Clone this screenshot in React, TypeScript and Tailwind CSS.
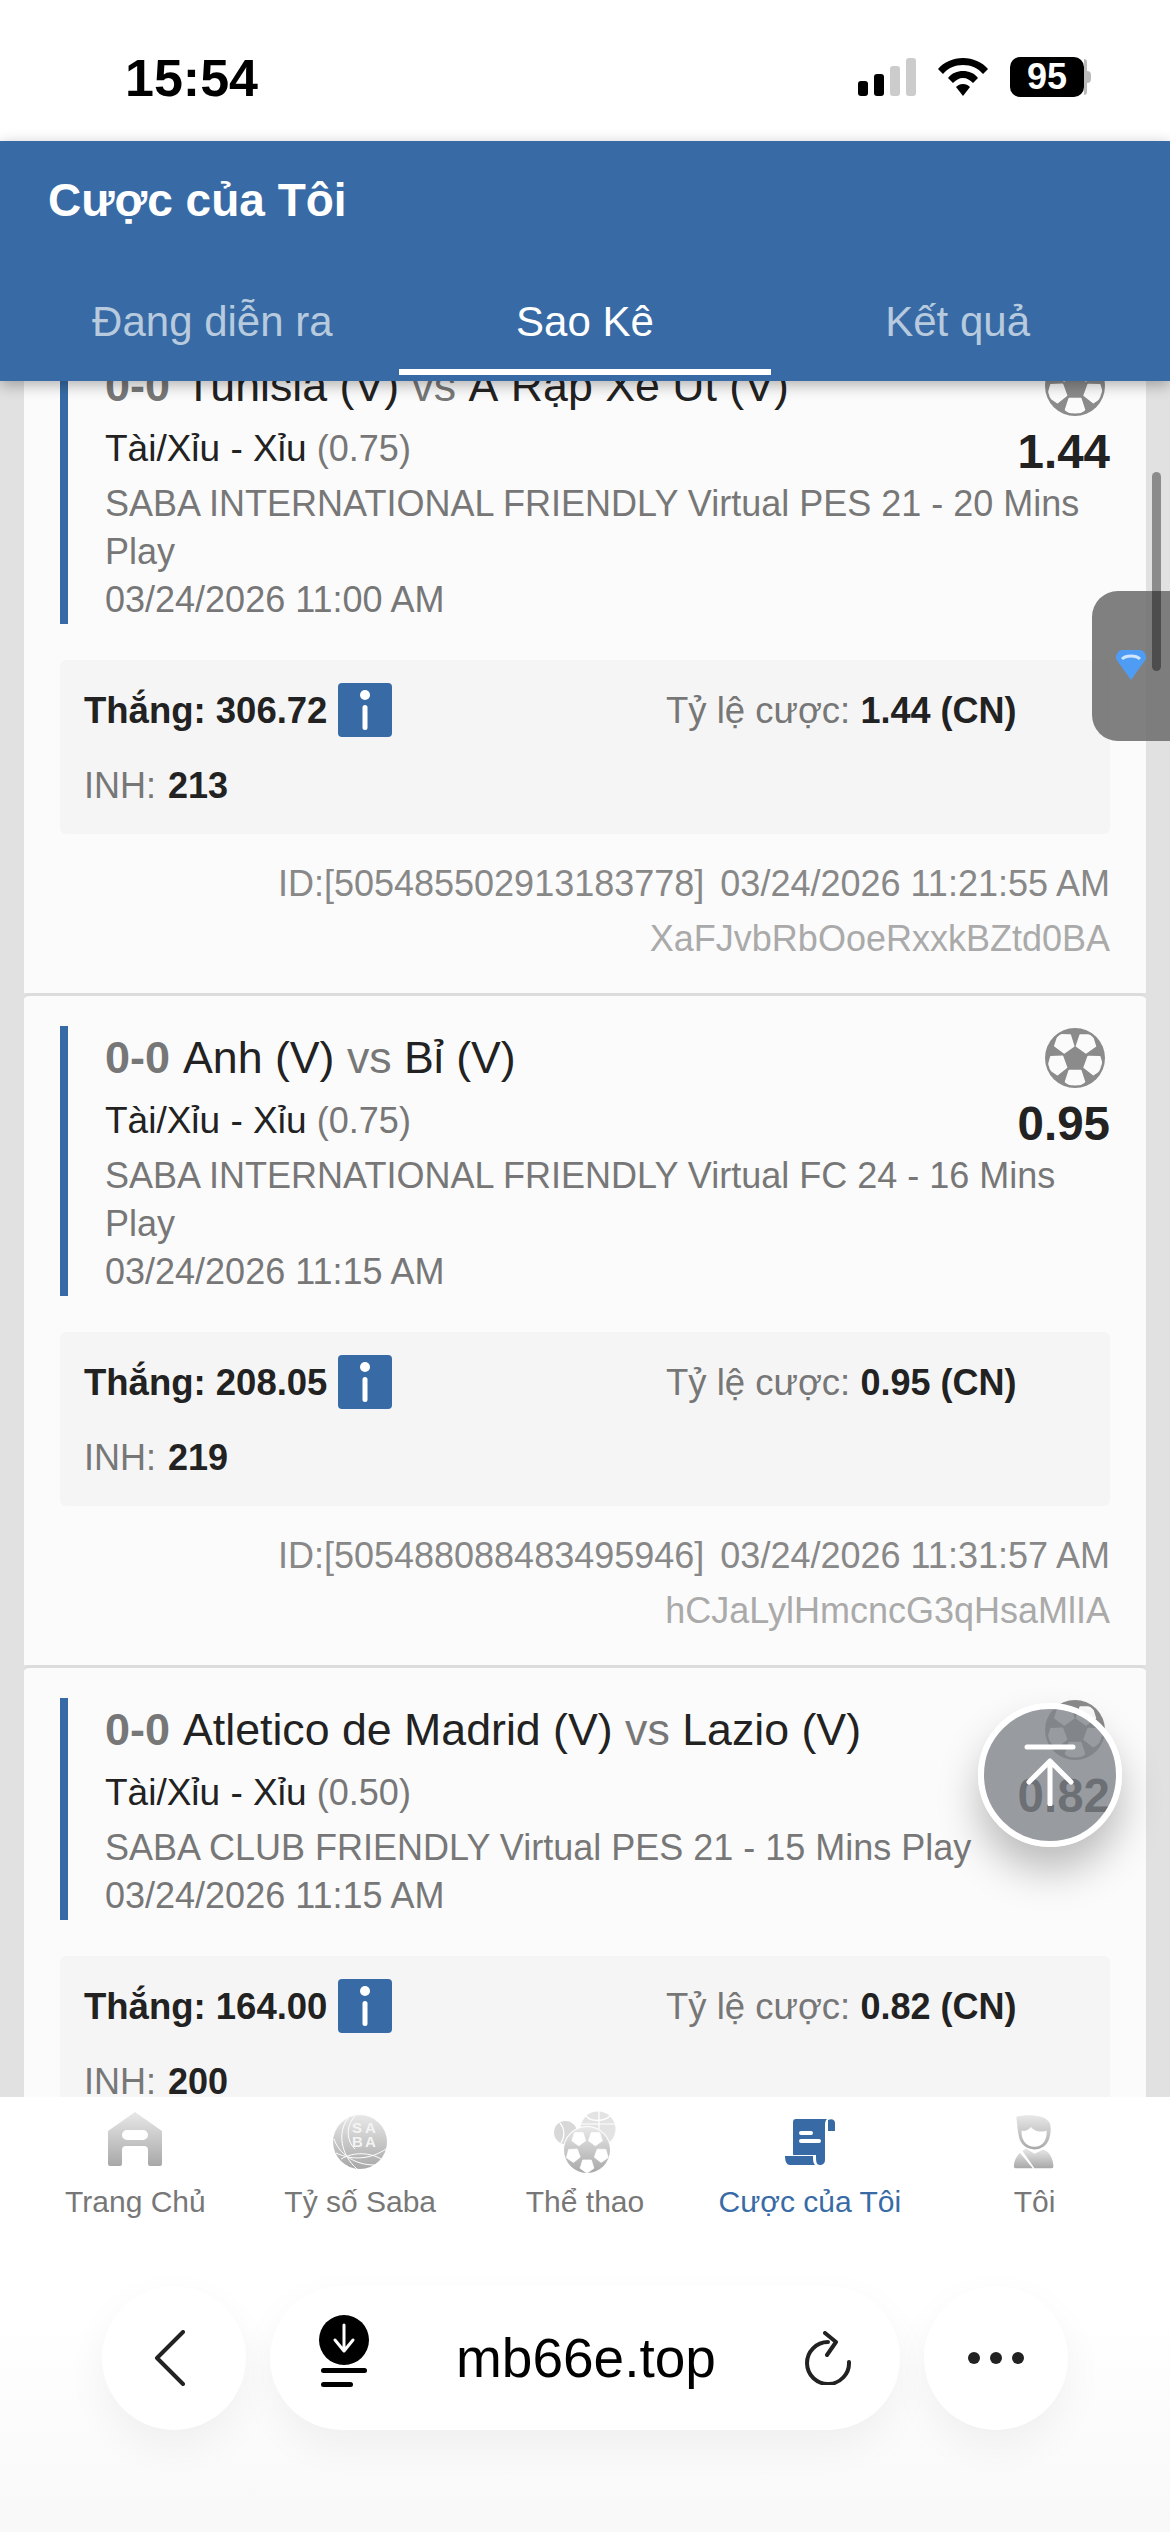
import React from "react";

const F = "font-['Liberation_Sans',Arial,sans-serif]";

function pent(cx: number, cy: number, r: number, ox = 30, oy = 30) {
  const a0 = Math.atan2(cy - oy, cx - ox);
  const pts: string[] = [];
  for (let i = 0; i < 5; i++) {
    const a = a0 + (i * 2 * Math.PI) / 5;
    pts.push(`${(cx + r * Math.cos(a)).toFixed(2)},${(cy + r * Math.sin(a)).toFixed(2)}`);
  }
  return pts.join(" ");
}

const PATCHES: [number, number][] = [
  [19.3, 15],
  [41, 15],
  [12, 36.7],
  [48.7, 36.7],
  [30, 50.7],
];

function Ball({ className }: { className?: string }) {
  return (
    <svg viewBox="0 0 60 60" className={className}>
      <defs>
        <clipPath id="ballclip">
          <circle cx="30" cy="30" r="27.5" />
        </clipPath>
      </defs>
      <circle cx="30" cy="30" r="30" fill="#8b8b8b" />
      <g clipPath="url(#ballclip)" fill="#fbfbfb" stroke="#fbfbfb" strokeWidth="1.5" strokeLinejoin="round">
        {PATCHES.map(([x, y]) => (
          <polygon key={x} points={pent(x, y, 10)} />
        ))}
      </g>
    </svg>
  );
}

type BetProps = {
  title: [string, string];
  hdp: string;
  odds: string;
  league: string;
  kick: string;
  win: string;
  stake: string;
  id?: string;
  time?: string;
  hash?: string;
};

function Card(b: BetProps) {
  return (
    <div className="mx-[24px] rounded-t-[6px] border-t-[3px] border-[#dcdcdc] bg-[#fbfbfb] px-[36px] pt-[30px] pb-[30px]">
      <div className="relative border-l-[8px] border-[#386ba5] pl-[37px]">
        <div className="h-[64px] text-[44.7px] leading-[64px] whitespace-nowrap text-[#222]">
          <span className="text-[45px] font-bold text-[#777]">0-0</span>
          <span className="ml-[3px]"> {b.title[0]} </span>
          <span className="text-[#777]">vs</span> {b.title[1]}
        </div>
        <div className="h-[62px] text-[37px] leading-[62px] text-[#222]">
          Tài/Xỉu - Xỉu <span className="text-[36px] text-[#777]">({b.hdp})</span>
        </div>
        <div className="text-[36px] leading-[48px] text-[#777]">{b.league}</div>
        <div className="text-[36px] leading-[48px] text-[#777]">{b.kick}</div>
        <Ball className="absolute top-[2px] right-[5px] h-[60px] w-[60px]" />
        <div className="absolute top-[72px] right-0 text-[47.5px] leading-[52px] font-bold text-[#222]">{b.odds}</div>
      </div>
      <div className="mt-[36px] flex h-[174px] flex-col rounded-[6px] bg-[#f5f5f5] px-[24px] pt-[24px]">
        <div className="flex h-[54px] items-center">
          <div className="flex w-[582px] items-center text-[36.5px] font-bold text-[#222]">
            <span>Thắng: {b.win}</span>
            <span className="ml-[11px] flex h-[54px] w-[54px] -translate-y-[1px] items-center justify-center rounded-[4px] bg-[#386ba5]">
              <svg viewBox="0 0 12 40" className="h-[40px] w-[12px]">
                <circle cx="6" cy="5" r="5" fill="#fff" />
                <rect x="3.500" y="15" width="5" height="25" rx="2.500" fill="#fff" />
              </svg>
            </span>
          </div>
          <div className="text-[36.5px] text-[#777]">
            Tỷ lệ cược: <span className="text-[36px] font-bold text-[#222]">{b.odds} (CN)</span>
          </div>
        </div>
        <div className="mt-[21px] text-[36px] leading-[54px] text-[#777]">
          INH: <span className="ml-[2px] font-bold text-[#222]">{b.stake}</span>
        </div>
      </div>
      {b.id && (
        <>
          <div className="mt-[26px] text-right text-[36px] leading-[48px] whitespace-nowrap text-[#888]">
            ID:[{b.id}]<span className="ml-[6px]"> {b.time}</span>
          </div>
          <div className="mt-[7px] text-right text-[36px] leading-[48px] text-[#aaa]">{b.hash}</div>
        </>
      )}
    </div>
  );
}

const bets: BetProps[] = [
  {
    title: ["Tunisia (V)", "Ả Rập Xê Út (V)"],
    hdp: "0.75",
    odds: "1.44",
    league: "SABA INTERNATIONAL FRIENDLY Virtual PES 21 - 20 Mins Play",
    kick: "03/24/2026 11:00 AM",
    win: "306.72",
    stake: "213",
    id: "505485502913183778",
    time: "03/24/2026 11:21:55 AM",
    hash: "XaFJvbRbOoeRxxkBZtd0BA",
  },
  {
    title: ["Anh (V)", "Bỉ (V)"],
    hdp: "0.75",
    odds: "0.95",
    league: "SABA INTERNATIONAL FRIENDLY Virtual FC 24 - 16 Mins Play",
    kick: "03/24/2026 11:15 AM",
    win: "208.05",
    stake: "219",
    id: "505488088483495946",
    time: "03/24/2026 11:31:57 AM",
    hash: "hCJaLylHmcncG3qHsaMlIA",
  },
  {
    title: ["Atletico de Madrid (V)", "Lazio (V)"],
    hdp: "0.50",
    odds: "0.82",
    league: "SABA CLUB FRIENDLY Virtual PES 21 - 15 Mins Play",
    kick: "03/24/2026 11:15 AM",
    win: "164.00",
    stake: "200",
  },
];

function NavIcon({ kind }: { kind: number }) {
  const gid = `nav${kind}`;
  const grad = (
    <defs>
      <linearGradient id={gid} x1="0" y1="0" x2="0" y2="1">
        <stop offset="0" stopColor="#e8e8e8" />
        <stop offset="1" stopColor="#a8a8a8" />
      </linearGradient>
    </defs>
  );
  if (kind === 0)
    return (
      <svg viewBox="0 0 54 54" className="h-[54px] w-[54px]">
        {grad}
        <path
          fillRule="evenodd"
          fill={`url(#${gid})`}
          d="M27 0 L54 19 V52 a2 2 0 0 1-2 2 H42 a2 2 0 0 1-2-2 V38 a4 4 0 0 0-4-4 H18 a4 4 0 0 0-4 4 V52 a2 2 0 0 1-2 2 H2 a2 2 0 0 1-2-2 V19 Z M19 18 a5 5 0 0 0 0 10 H35 a5 5 0 0 0 0-10 Z"
        />
      </svg>
    );
  if (kind === 1)
    return (
      <svg viewBox="0 0 54 54" className="h-[54px] w-[54px]">
        {grad}
        <circle cx="27" cy="27" r="27" fill={`url(#${gid})`} />
        <g fill="none" stroke="#fff" strokeWidth="1">
          <path d="M1 24 C6 38 20 50 42 50" />
          <path d="M15 3 C4 18 8 40 24 54" />
          <path d="M3 38 C20 46 38 44 53 34" />
          <path d="M8 44 C22 36 38 38 48 44" />
          <path d="M22 1 C12 12 14 26 22 34" />
        </g>
        <g fill="#f4f4f4" fontSize="15" fontWeight="700">
          <text x="19" y="18">S</text>
          <text x="32" y="18">A</text>
          <text x="19" y="32">B</text>
          <text x="32" y="32">A</text>
        </g>
      </svg>
    );
  if (kind === 2)
    return (
      <svg viewBox="0 0 62 62" className="h-[62px] w-[62px]">
        {grad}
        <circle cx="11.500" cy="21.500" r="11.500" fill="#d8d8d8" />
        <path d="M6 12 C11 18 11 26 7 32" stroke="#fff" strokeWidth="1.2" fill="none" />
        <circle cx="44" cy="18" r="17.500" fill="#e3e3e3" />
        <path d="M26 13 H62 M45 0 V18 M32 5 C37 11 51 11 57 4" stroke="#fff" strokeWidth="1.2" fill="none" />
        <circle cx="33" cy="39" r="24" fill="#fff" />
        <g transform="translate(10 16) scale(0.767)">
          <circle cx="30" cy="30" r="30" fill={`url(#${gid})`} />
          <g fill="#fff" stroke="#fff" strokeWidth="1" strokeLinejoin="round">
            {PATCHES.map(([x, y]) => (
              <polygon key={x} points={pent(x, y, 9.5)} />
            ))}
          </g>
        </g>
      </svg>
    );
  if (kind === 3)
    return (
      <svg viewBox="0 0 50 46" className="h-[46px] w-[50px]">
        <path
          fill="#386ba5"
          fillRule="evenodd"
          d="M11 0 H42 C40 2 40 4 40 7 V41 C40 45 37 46 35 46 C31 46 31 42 31 36 H8 V3 C8 1 9 0 11 0 Z M16 12 a2 2 0 0 0 0 4 H26 a2 2 0 0 0 0-4 Z M16 20 a2 2 0 0 0 0 4 H34 a2 2 0 0 0 0-4 Z"
        />
        <path fill="#386ba5" d="M43 1 C47 -1 50 1 50 4 V12 H43 Z" />
        <path fill="#386ba5" d="M0 37 H28 C28 41 28 44 30 46 H5 C2 46 0 43 0 37 Z" />
      </svg>
    );
  return (
    <svg viewBox="0 0 48 64" className="h-[55px] w-[43px]">
      {grad}
      <path
        fill={`url(#${gid})`}
        d="M3 2 C14 -1 38 -1 42 10 C44 18 42 24 41 28 C38 36 32 40 24 40 C14 40 8 34 6 26 C4 18 4 10 3 4 Z"
      />
      <path fill="#fff" d="M9 18 C14 20 18 16 20 14 C24 20 34 20 38 18 C39 28 34 37 24 37 C14 37 8 28 9 18 Z" />
      <path
        fill={`url(#${gid})`}
        d="M14 39 L24 45 L34 40 C42 42 46 52 46 60 a2 2 0 0 1-2 2 H24 L10 42 Z M7 44 L22 62 H2 a2 2 0 0 1-2-2 C0 53 3 48 7 44 Z"
      />
    </svg>
  );
}

const iconPad = ["pt-[2px]", "pt-[5px]", "pt-[1px]", "pt-[9px]", "pt-[5px]"];

export default function App() {
  const nav = ["Trang Chủ", "Tỷ số Saba", "Thể thao", "Cược của Tôi", "Tôi"];
  return (
    <div className={`${F} relative flex h-[2532px] w-[1170px] flex-col overflow-hidden bg-white`}>
      {/* status bar */}
      <div className="flex h-[141px] shrink-0 items-start justify-between bg-white pt-[52px] pr-[79px] pl-[125px]">
        <div className="text-[52px] leading-[52px] font-bold text-black">15:54</div>
        <div className="flex items-center gap-[22px] pt-[5px]">
          <svg viewBox="0 0 58 38" className="h-[38px] w-[58px]">
            <rect x="0" y="23" width="10" height="15" rx="3" fill="#000" />
            <rect x="16" y="16" width="10" height="22" rx="3" fill="#000" />
            <rect x="32" y="8" width="10" height="30" rx="3" fill="#ccc" />
            <rect x="48" y="0" width="10" height="38" rx="3" fill="#ccc" />
          </svg>
          <svg viewBox="0 0 50 38" className="h-[38px] w-[50px]">
            <path d="M25 0 C35 0 44 4 50 11 L45 16 C40 10 33 7 25 7 C17 7 10 10 5 16 L0 11 C6 4 15 0 25 0 Z" />
            <path d="M25 13 C31 13 36 15 40 20 L35 25 C32 22 29 20 25 20 C21 20 18 22 15 25 L10 20 C14 15 19 13 25 13 Z" />
            <path d="M25 26 C28 26 30 27 32 29 L25 38 L18 29 C20 27 22 26 25 26 Z" />
          </svg>
          <div className="flex items-center">
            <div className="flex h-[40px] w-[74px] items-center justify-center rounded-[10px] bg-black text-[36px] font-bold text-white">95</div>
            <div className="h-[36px] w-[3px] rounded-r bg-[#bbb]" />
            <div className="h-[12px] w-[4px] rounded-r-full bg-[#bbb]" />
          </div>
        </div>
      </div>

      {/* header */}
      <div className="relative z-10 h-[240px] shrink-0 bg-[#386ba5] shadow-[0_4px_14px_rgba(0,0,0,0.3)]">
        <div className="pt-[33px] pl-[48px] text-[46px] leading-[52px] font-bold text-white">Cược của Tôi</div>
        <div className="mt-[72px] grid grid-cols-3 px-[26px] text-center text-[42px] leading-[48px]">
          <div className="text-[#b7cade]">Đang diễn ra</div>
          <div className="relative h-[64px] text-white">
            Sao Kê
            <div className="absolute bottom-[-13px] left-0 h-[6px] w-full bg-white" />
          </div>
          <div className="text-[#b7cade]">Kết quả</div>
        </div>
      </div>

      {/* list */}
      <div className="min-h-0 flex-1 overflow-hidden bg-[#e1e1e1]">
        <div className="mt-[-60px]">
          {bets.map((b) => (
            <Card key={b.odds} {...b} />
          ))}
        </div>
      </div>

      {/* nav */}
      <div className="relative z-10 h-[435px] shrink-0 bg-gradient-to-b from-white from-50% to-[#f8f8f8]">
        <div className="grid grid-cols-5 px-[23px] pt-[13px]">
          {nav.map((n, i) => (
            <div key={n} className="flex flex-col items-center">
              <div className={`flex h-[64px] items-start justify-center ${iconPad[i]}`}>
                <NavIcon kind={i} />
              </div>
              <div className={`mt-[10px] text-[30px] leading-[36px] whitespace-nowrap ${i === 3 ? "text-[#386ba5]" : "text-[#777]"}`}>{n}</div>
            </div>
          ))}
        </div>
        {/* browser bar */}
        <div className="mt-[66px] flex justify-center gap-[24px]">
          <div className="flex h-[144px] w-[144px] items-center justify-center rounded-full bg-white pr-[8px] shadow-[0_16px_40px_rgba(0,0,0,0.05)]">
            <svg viewBox="0 0 32 56" className="h-[56px] w-[32px]" fill="none" stroke="#222" strokeWidth="4" strokeLinecap="round" strokeLinejoin="round">
              <path d="M29 2 L3 28 L29 54" />
            </svg>
          </div>
          <div className="flex h-[144px] w-[630px] items-center rounded-full bg-white pr-[48px] pl-[48px] shadow-[0_16px_40px_rgba(0,0,0,0.05)]">
            <svg viewBox="0 0 52 72" className="h-[72px] w-[52px] shrink-0 -translate-y-[7px]">
              <circle cx="26" cy="25" r="25" fill="#000" />
              <path d="M26 10 V34 M17 25 L26 36 L35 25" fill="none" stroke="#fff" strokeWidth="3" strokeLinecap="round" strokeLinejoin="round" />
              <rect x="3" y="53" width="46" height="5" rx="2.500" fill="#000" />
              <rect x="3" y="67" width="32" height="5" rx="2.500" fill="#000" />
            </svg>
            <div className="flex-1 pr-[2px] text-center text-[55px] leading-[60px] text-black">mb66e.top</div>
            <svg viewBox="0 0 48 54" className="h-[54px] w-[48px] shrink-0" fill="none" stroke="#222" strokeWidth="4" strokeLinecap="round" strokeLinejoin="round">
              <path d="M45 31 A21 21 0 1 1 24 11" />
              <path d="M21 2 L32 11 L23 24" />
            </svg>
          </div>
          <div className="flex h-[144px] w-[144px] items-center justify-center gap-[10px] rounded-full bg-white shadow-[0_16px_40px_rgba(0,0,0,0.05)]">
            <span className="h-[12px] w-[12px] rounded-full bg-[#222]" />
            <span className="h-[12px] w-[12px] rounded-full bg-[#222]" />
            <span className="h-[12px] w-[12px] rounded-full bg-[#222]" />
          </div>
        </div>
      </div>

      {/* overlays */}
      <div className="absolute top-[472px] right-[9px] z-20 h-[199px] w-[9px] rounded-full bg-[rgba(0,0,0,0.38)]" />
      <div className="absolute top-[591px] right-0 z-10 flex h-[150px] w-[78px] items-center rounded-l-[26px] bg-[rgba(110,110,110,0.88)] pb-[3px] pl-[24px]">
        <svg viewBox="0 0 30 30" className="h-[30px] w-[30px]">
          <path d="M6 0 H24 Q28 0 30 6 L30 9 L15 30 L0 9 L0 6 Q2 0 6 0 Z" fill="#4f9cf5" />
          <path d="M6 9 C10 5 20 5 24 9" stroke="#cfe6ff" strokeWidth="3" fill="none" />
        </svg>
      </div>
      <div className="absolute top-[1703px] left-[978px] z-10 flex h-[144px] w-[144px] items-center justify-center rounded-full border-[6px] border-white bg-[rgba(128,133,138,0.8)] shadow-[0_24px_40px_rgba(0,0,0,0.25)]">
        <svg viewBox="0 0 52 62" className="h-[62px] w-[52px]" fill="none" stroke="#fff" strokeWidth="5" strokeLinecap="round" strokeLinejoin="round">
          <path d="M3 3 H49" />
          <path d="M26 60 V18 M5 38 L26 17 L47 38" />
        </svg>
      </div>
    </div>
  );
}
